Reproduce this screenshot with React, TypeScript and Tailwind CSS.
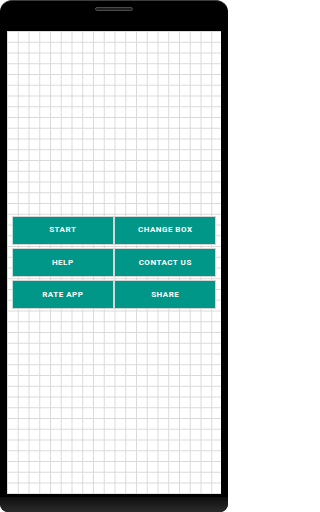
const buttons = ["Start", "Change Box", "Help", "Contact Us", "Rate App", "Share"];

export default function App() {
  return (
    <div className="w-[228px] h-[512px] bg-white">
      <div className="h-full flex flex-col bg-black rounded-t-[12px] rounded-b-[8px] border-t border-[#3c3c3c] overflow-hidden">
        <div className="h-[30px] flex justify-center pt-[6px] shrink-0">
          <div className="w-[38px] h-[4px] rounded-full bg-[#1e1e1e] border border-[#4a4a4a]" />
        </div>
        <div className="mx-[7px] h-[463px] shrink-0 bg-white bg-[linear-gradient(to_right,#dadada_1px,transparent_1px),linear-gradient(to_bottom,#dadada_1px,transparent_1px)] bg-[size:10.75px_10.75px] flex items-center px-[5.7px]">
          <div className="w-full grid grid-cols-2 gap-x-[2.3px] gap-y-[5.5px]">
            {buttons.map((b) => (
              <button
                key={b}
                className="h-[26.7px] bg-[#009688] outline outline-1 outline-[#d2d6d5] text-white uppercase text-[8px] font-bold tracking-[0.5px] font-['Roboto',sans-serif]"
              >
                {b}
              </button>
            ))}
          </div>
        </div>
        <div className="h-[3px] shrink-0 bg-black" />
        <div className="flex-1 bg-[linear-gradient(to_bottom,#0d0d0d,#2b2b2b)] rounded-b-[8px]" />
      </div>
    </div>
  );
}
